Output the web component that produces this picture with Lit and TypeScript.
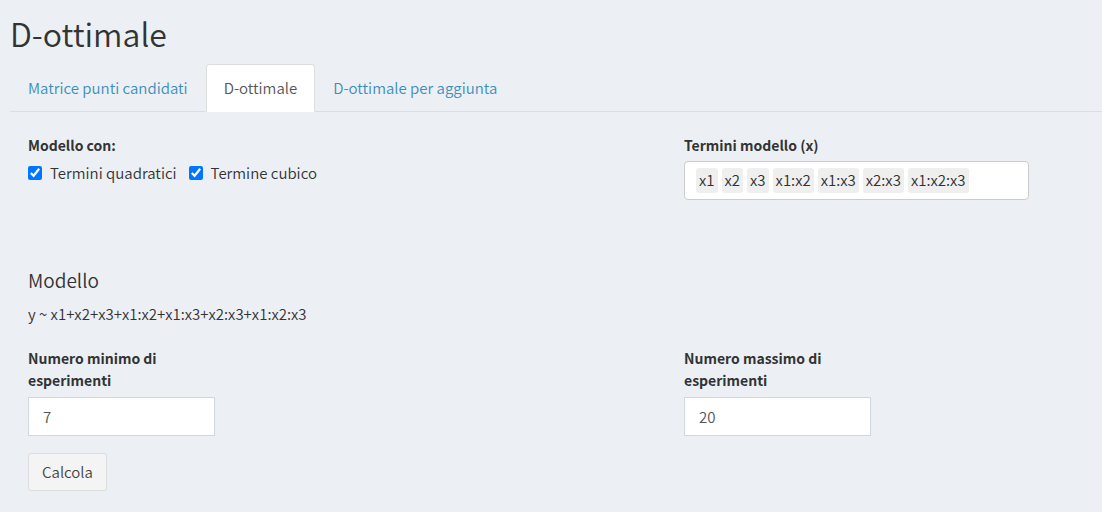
import { LitElement, html, css } from "lit";
import { customElement, state } from "lit/decorators.js";

@customElement("app-root")
export class AppRoot extends LitElement {
  @state() private active = 1;

  private tabs = ["Matrice punti candidati", "D-ottimale", "D-ottimale per aggiunta"];
  private terms = ["x1", "x2", "x3", "x1:x2", "x1:x3", "x2:x3", "x1:x2:x3"];

  static styles = css`
    :host {
      display: block;
      box-sizing: border-box;
      min-height: 100vh;
      padding: 12px 0 20px 10px;
      background: #ecf0f5;
      color: #333;
      font: 350 15px/22px "Noto Sans CJK SC", "Noto Sans", sans-serif;
    }
    * { box-sizing: border-box; }
    h1 { margin: 0 0 10px; font-size: 32px; line-height: 42px; font-weight: inherit; }
    .tabs { display: flex; border-bottom: 1px solid #ddd; }
    .tab {
      margin-bottom: -1px;
      padding: 12px 17px;
      border: 1px solid transparent;
      border-radius: 4px 4px 0 0;
      color: #3c8dbc;
      text-decoration: none;
      white-space: nowrap;
    }
    .tab.active { background: #fff; border-color: #ddd #ddd transparent; color: #555; }
    .panel { padding: 22px 18px 0; }
    .row { display: grid; grid-template-columns: 656fr 400fr; }
    .label { display: block; margin: 0 0 5px; font-size: 14px; font-weight: 700; }
    .checks { display: flex; gap: 12px; padding-top: 1px; }
    .check { display: flex; align-items: center; gap: 8px; }
    .check input { width: 14px; height: 14px; margin: 0; accent-color: #0075ff; }
    .terms {
      display: flex; flex-wrap: wrap; gap: 4px;
      max-width: 345px; padding: 6px 11px;
      background: #fff; border: 1px solid #ccc; border-radius: 4px;
    }
    .term { padding: 1px 3px 2px; border-radius: 3px; background: #efefef; color: #303030; }
    .model { margin: 69px 0 22px; }
    h2 { margin: 0 0 12px; font-size: 19px; line-height: 22px; font-weight: inherit; }
    p { margin: 0; }
    .field { width: 187px; }
    .field .label { margin-bottom: 6px; }
    .number {
      width: 100%; height: 39px; padding: 7px 14px;
      border: 1px solid #d2d6de; background: #fff; color: #555; font: inherit;
    }
    .button {
      margin-top: 17px; padding: 7px 13px;
      border: 1px solid #ddd; border-radius: 3px;
      background: #f4f4f4; color: #444; font: inherit;
    }
  `;

  render() {
    return html`
      <h1>D-ottimale</h1>
      <nav class="tabs">
        ${this.tabs.map((t, i) => html`<a class="tab ${i === this.active ? "active" : ""}" href="#" @click=${(e: Event) => { e.preventDefault(); this.active = i; }}>${t}</a>`)}
      </nav>
      <main class="panel">
        <div class="row">
          <div>
            <span class="label" id="with">Modello con:</span>
            <div class="checks" role="group" aria-labelledby="with">
              <label class="check"><input type="checkbox" checked />Termini quadratici</label>
              <label class="check"><input type="checkbox" checked />Termine cubico</label>
            </div>
          </div>
          <div>
            <span class="label" id="terms">Termini modello (x)</span>
            <div class="terms" role="group" aria-labelledby="terms">
              ${this.terms.map((t) => html`<span class="term">${t}</span>`)}
            </div>
          </div>
        </div>
        <section class="model">
          <h2>Modello</h2>
          <p>y ~ ${this.terms.join("+")}</p>
        </section>
        <div class="row">
          <div class="field">
            <label class="label" for="min">Numero minimo di esperimenti</label>
            <input class="number" id="min" type="number" value="7" />
          </div>
          <div class="field">
            <label class="label" for="max">Numero massimo di esperimenti</label>
            <input class="number" id="max" type="number" value="20" />
          </div>
        </div>
        <button class="button" type="button">Calcola</button>
      </main>
    `;
  }
}
